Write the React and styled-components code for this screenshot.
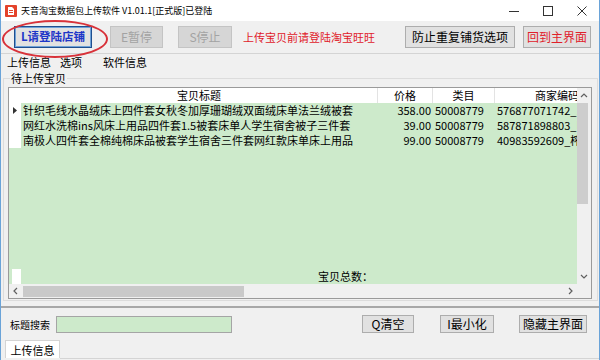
import React from "react";
import styled, { createGlobalStyle } from "styled-components";

const GREEN = "#cdeacb";

const GlobalStyle = createGlobalStyle`
  html, body { margin: 0; padding: 0; background: #fff; }
  body {
    font-family: "Noto Sans CJK SC", "Noto Sans", sans-serif;
    font-size: 12px;
    color: #000;
  }
`;

const Window = styled.div`
  position: relative;
  width: 600px;
  height: 360px;
  box-sizing: border-box;
  border-left: 1px solid #6aa3d8;
  border-right: 1px solid #6aa3d8;
  background: #f0f0f0;
  display: flex;
  flex-direction: column;
  overflow: hidden;
`;

const TitleBar = styled.div`
  height: 21px;
  flex: none;
  background: #fff;
  display: flex;
  align-items: center;
  padding-left: 4px;
`;

const TitleText = styled.span`
  margin-left: 4px;
  font-size: 9px;
  line-height: 21px;
  white-space: nowrap;
`;

const Controls = styled.div`
  margin-left: auto;
  display: flex;
`;

const ControlBox = styled.div`
  width: 34px;
  height: 21px;
  display: flex;
  align-items: center;
  justify-content: center;
`;

const Toolbar = styled.div`
  height: 32px;
  flex: none;
  display: flex;
  align-items: center;
  padding-left: 13px;
  border-bottom: 1px solid #d4d4d4;
`;

const Button = styled.div`
  box-sizing: border-box;
  width: ${(p) => p.$w}px;
  height: ${(p) => p.$h || 22}px;
  margin-left: ${(p) => p.$ml || 0}px;
  display: flex;
  align-items: center;
  justify-content: center;
  background: ${(p) => (p.$disabled ? "#d6d6d6" : "#e1e1e1")};
  border: 1px solid ${(p) => (p.$disabled ? "#c4c4c4" : "#adadad")};
  color: ${(p) => (p.$disabled ? "#a3a3a3" : p.$red ? "#e0202a" : "#000")};
  font-size: 12px;
  line-height: 1;
  white-space: nowrap;
`;

const LoginButton = styled(Button)`
  border: 1px solid #1f4f8f;
  box-shadow: inset 0 0 0 1px #6ea2d8;
  color: #1d36c8;
  font-weight: bold;
  font-size: 11.5px;
`;

const Notice = styled.span`
  margin-left: 11px;
  color: #e0202a;
  font-size: 11px;
  white-space: nowrap;
`;

const Ellipse = styled.div`
  position: absolute;
  left: 1px;
  top: 20px;
  width: 106px;
  height: 38px;
  box-sizing: border-box;
  border: 2px solid #d8323a;
  border-radius: 50%;
  pointer-events: none;
`;

const MenuBar = styled.div`
  height: 17px;
  flex: none;
  display: flex;
  align-items: center;
  padding-left: 6px;
  font-size: 11px;
`;

const MenuItem = styled.span`
  margin-left: ${(p) => p.$ml || 0}px;
  line-height: 17px;
`;

const GroupBox = styled.fieldset`
  margin: 0 1px 0 2px;
  padding: 2px 5px 1px 4px;
  border: 1px solid #dcdcdc;
  min-width: 0;
  flex: none;
`;

const Legend = styled.legend`
  padding: 0 1px;
  margin-left: 2px;
  font-size: 11px;
  line-height: 14px;
`;

const Grid = styled.div`
  box-sizing: border-box;
  height: 212px;
  border: 1px solid #9a9a9a;
  background: ${GREEN};
  display: flex;
  flex-direction: column;
  font-size: 11px;
`;

const GridMain = styled.div`
  flex: 1;
  display: flex;
  min-height: 0;
`;

const GridContent = styled.div`
  flex: 1;
  display: flex;
  flex-direction: column;
  overflow: hidden;
`;

const Row = styled.div`
  height: 15px;
  flex: none;
  display: flex;
  background: ${(p) => (p.$header ? "#fff" : "transparent")};
`;

const RowHead = styled.div`
  width: ${(p) => (p.$narrow ? 9 : 12)}px;
  margin-left: ${(p) => (p.$narrow ? 3 : 0)}px;
  flex: none;
  background: #fff;
  display: flex;
  align-items: center;
  justify-content: center;
`;

const Cell = styled.div`
  width: ${(p) => p.$w}px;
  flex: none;
  box-sizing: border-box;
  padding: 0 2px;
  line-height: 15px;
  white-space: nowrap;
  overflow: hidden;
  text-align: ${(p) => p.$align || "left"};
  background: ${(p) => (p.$header ? "#fff" : p.$empty ? "transparent" : GREEN)};
  border-right: ${(p) => (p.$header ? "1px solid #e3e3e3" : "none")};
`;

const Fill = styled.div`
  flex: 1;
`;

const VScroll = styled.div`
  width: 14px;
  flex: none;
  background: #f0f0f0;
  display: flex;
  flex-direction: column;
`;

const ArrowBox = styled.div`
  width: ${(p) => p.$w || 14}px;
  height: ${(p) => p.$h || 15}px;
  flex: none;
  display: flex;
  align-items: center;
  justify-content: center;
`;

const VThumb = styled.div`
  height: 101px;
  margin: 0 3px 0 0;
  background: #cdcdcd;
`;

const HScroll = styled.div`
  height: 14px;
  flex: none;
  background: #f0f0f0;
  display: flex;
  align-items: center;
`;

const HThumb = styled.div`
  width: 221px;
  height: 11px;
  background: #c9c9c9;
`;

const Splitter = styled.div`
  flex: none;
  height: 2px;
  margin-top: 5px;
  background: #a8a8a8;
`;

const SearchPanel = styled.div`
  height: 32px;
  flex: none;
  display: flex;
  align-items: center;
  padding-left: 9px;
`;

const SearchLabel = styled.span`
  font-size: 10px;
  margin-right: 6px;
`;

const SearchInput = styled.div`
  box-sizing: border-box;
  width: 176px;
  height: 17px;
  background: ${GREEN};
  border: 1px solid #a5a5a5;
`;

const TabStrip = styled.div`
  height: 20px;
  flex: none;
  display: flex;
  padding-left: 4px;
`;

const Tab = styled.div`
  box-sizing: border-box;
  width: 55px;
  height: 18px;
  background: #fff;
  border: 1px solid #d4d4d4;
  border-bottom: none;
  font-size: 11px;
  display: flex;
  align-items: center;
  justify-content: center;
`;

const TabRest = styled.div`
  flex: 1;
  height: 18px;
  border-bottom: 1px solid #d4d4d4;
`;

const Chevron = ({ dir }) => {
  const pts = {
    up: "1,5 4,2 7,5",
    down: "1,2 4,5 7,2",
    left: "5,1 2,4 5,7",
    right: "3,1 6,4 3,7",
  }[dir];
  return (
    <svg width="8" height="8" viewBox="0 0 8 8">
      <polyline points={pts} fill="none" stroke="#606060" strokeWidth="1.2" />
    </svg>
  );
};

const rows = [
  {
    title: "针织毛线水晶绒床上四件套女秋冬加厚珊瑚绒双面绒床单法兰绒被套",
    price: "358.00",
    cat: "50008779",
    code: "576877071742_,",
  },
  {
    title: "网红水洗棉ins风床上用品四件套1.5被套床单人学生宿舍被子三件套",
    price: "39.00",
    cat: "50008779",
    code: "587871898803_l",
  },
  {
    title: "南极人四件套全棉纯棉床品被套学生宿舍三件套网红款床单床上用品",
    price: "99.00",
    cat: "50008779",
    code: "40983592609_榨",
  },
];

export default function App() {
  return (
    <>
      <GlobalStyle />
      <Window>
        <TitleBar>
          <svg width="12" height="12" viewBox="0 0 12 12">
            <rect x="0" y="0" width="12" height="12" rx="1" fill="#e4432b" />
            <path d="M3 2h4l2 2v6H3z" fill="#fff" />
            <rect x="4" y="5" width="4" height="1" fill="#e4432b" />
            <rect x="4" y="7" width="4" height="1" fill="#e4432b" />
          </svg>
          <TitleText>天音淘宝数据包上传软件 V1.01.1[正式版]已登陆</TitleText>
          <Controls>
            <ControlBox>
              <svg width="10" height="10" viewBox="0 0 10 10">
                <line x1="0" y1="5.5" x2="10" y2="5.5" stroke="#333" strokeWidth="1" />
              </svg>
            </ControlBox>
            <ControlBox>
              <svg width="10" height="10" viewBox="0 0 10 10">
                <rect x="0.5" y="0.5" width="9" height="9" fill="none" stroke="#333" strokeWidth="1" />
              </svg>
            </ControlBox>
            <ControlBox>
              <svg width="10" height="10" viewBox="0 0 10 10">
                <path d="M0.5 0.5L9.5 9.5M9.5 0.5L0.5 9.5" stroke="#333" strokeWidth="1" />
              </svg>
            </ControlBox>
          </Controls>
        </TitleBar>

        <Toolbar>
          <LoginButton $w={78}>L请登陆店铺</LoginButton>
          <Button $w={53} $ml={18} $disabled>
            E暂停
          </Button>
          <Button $w={54} $ml={15} $disabled>
            S停止
          </Button>
          <Notice>上传宝贝前请登陆淘宝旺旺</Notice>
          <Button $w={110} $ml={30}>
            防止重复铺货选项
          </Button>
          <Button $w={68} $ml={8} $red>
            回到主界面
          </Button>
        </Toolbar>

        <MenuBar>
          <MenuItem>上传信息</MenuItem>
          <MenuItem $ml={9}>选项</MenuItem>
          <MenuItem $ml={21}>软件信息</MenuItem>
        </MenuBar>

        <GroupBox>
          <Legend>待上传宝贝</Legend>
          <Grid>
            <GridMain>
              <GridContent>
                <Row $header>
                  <RowHead />
                  <Cell $w={357} $header $align="center">
                    宝贝标题
                  </Cell>
                  <Cell $w={55} $header $align="center">
                    价格
                  </Cell>
                  <Cell $w={62} $header $align="center">
                    类目
                  </Cell>
                  <Cell $w={125} $header $align="center">
                    商家编码
                  </Cell>
                </Row>
                {rows.map((r, i) => (
                  <Row key={r.code}>
                    <RowHead>
                      {i === 0 && (
                        <svg width="5" height="7" viewBox="0 0 5 7">
                          <path d="M0 0L4 3.5L0 7z" fill="#333" />
                        </svg>
                      )}
                    </RowHead>
                    <Cell $w={357}>{r.title}</Cell>
                    <Cell $w={55} $align="right">
                      {r.price}
                    </Cell>
                    <Cell $w={62}>{r.cat}</Cell>
                    <Cell $w={125}>{r.code}</Cell>
                  </Row>
                ))}
                <Fill />
                <Row>
                  <RowHead $narrow />
                  <Cell $w={354} $empty $align="right">
                    宝贝总数：
                  </Cell>
                </Row>
              </GridContent>
              <VScroll>
                <ArrowBox>
                  <Chevron dir="up" />
                </ArrowBox>
                <VThumb />
                <Fill />
                <ArrowBox>
                  <Chevron dir="down" />
                </ArrowBox>
              </VScroll>
            </GridMain>
            <HScroll>
              <ArrowBox $h={14}>
                <Chevron dir="left" />
              </ArrowBox>
              <HThumb />
              <Fill />
              <ArrowBox $h={14}>
                <Chevron dir="right" />
              </ArrowBox>
              <ArrowBox $h={14} />
            </HScroll>
          </Grid>
        </GroupBox>

        <Splitter />

        <SearchPanel>
          <SearchLabel>标题搜索</SearchLabel>
          <SearchInput />
          <Button $w={52} $h={18} $ml={130}>
            Q清空
          </Button>
          <Button $w={54} $h={18} $ml={26}>
            I最小化
          </Button>
          <Button $w={68} $h={18} $ml={25}>
            隐藏主界面
          </Button>
        </SearchPanel>

        <TabStrip>
          <Tab>上传信息</Tab>
          <TabRest />
        </TabStrip>

        <Ellipse />
      </Window>
    </>
  );
}
